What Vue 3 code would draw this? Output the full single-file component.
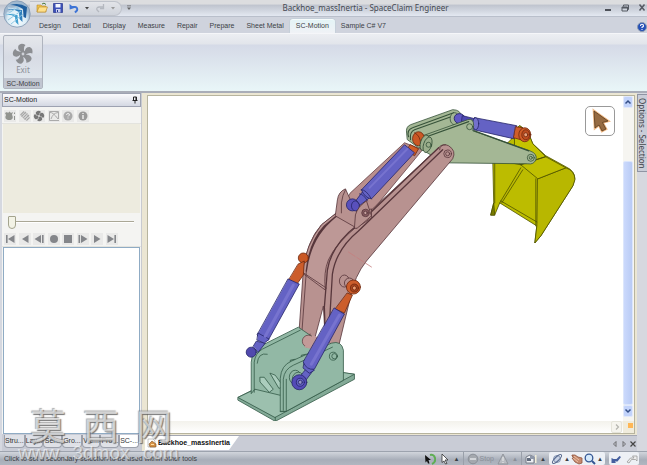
<script setup>
import { ref } from 'vue'

const tabs = ['Design', 'Detail', 'Display', 'Measure', 'Repair', 'Prepare', 'Sheet Metal', 'SC-Motion', 'Sample C# V7']
const activeTab = ref('SC-Motion')
const panelTabs = ['Stru...', 'Lay...', 'Sel...', 'Gro...', 'Vie...', 'Pro...', 'SC-...']
const activePanel = ref('SC-...')
const frame = ref(0)
const playback = [
  { name: 'First frame', d: 'M2 2h1.6v8H2zM10.5 2v8L4 6z' },
  { name: 'Play backwards', d: 'M9.5 2v8L3 6z' },
  { name: 'Step back', d: 'M8 2v8L1.5 6zM9 2h1.6v8H9z' },
  { name: 'Record', d: 'M6 2a4 4 0 1 1 0 8a4 4 0 1 1 0-8z' },
  { name: 'Stop', d: 'M2 2h8v8H2z' },
  { name: 'Step forward', d: 'M1.5 2h1.6v8H1.500zM4 2v8l6.500-4z' },
  { name: 'Play', d: 'M3 2v8l6.500-4z' },
  { name: 'Last frame', d: 'M1.500 2v8L8 6zM8.400 2H10v8H8.400z' }
]
</script>

<template>
  <div class="app">
    <header class="titlebar">
      <div class="quick">
        <button aria-label="Open"><svg viewBox="0 0 12 12"><path d="M1 3h4l1 1h4v6H1z" fill="#f0c34c" stroke="#b88a28" stroke-width=".6" /><path d="M1 10l2-5h8.500l-2 5z" fill="#ffe08a" stroke="#b88a28" stroke-width=".6" /><path d="M6 2q2-2 4 .5" fill="none" stroke="#4b7a3c" /></svg></button>
        <button aria-label="Save"><svg viewBox="0 0 12 12"><path d="M1.500 1.500h9v9h-9z" fill="#3c50b8" stroke="#27358d" stroke-width=".7" /><path d="M3.500 2h5v3.500h-5z" fill="#f3f5ff" /><path d="M4 7h4.500v3.500H4z" fill="#c9d0ee" /><path d="M5 8h1v2H5z" fill="#27358d" /></svg></button>
        <button aria-label="Undo"><svg viewBox="0 0 12 12"><path d="M4 5h3q3 .5 2 3.500l-2 2" fill="none" stroke="#3d74d6" stroke-width="2" /><path d="M1.500 2l.2 5.500L6.500 6z" fill="#3d74d6" /></svg></button>
        <button class="drop" aria-label="Undo history"><svg viewBox="0 0 6 6"><path d="M1 2h4L3 4.500z" fill="#444" /></svg></button>
        <button aria-label="Redo"><svg viewBox="0 0 12 12"><path d="M9 5H5Q2 5.500 3 8l2 2" fill="none" stroke="#b4b8bf" stroke-width="1.300" /><path d="M9.500 2v4.500H6" fill="none" stroke="#b4b8bf" stroke-width="1.300" /></svg></button>
        <button class="drop" aria-label="Redo history"><svg viewBox="0 0 6 6"><path d="M1 2h4L3 4.500z" fill="#999" /></svg></button>
      </div>
      <button class="drop more" aria-label="Customize"><svg viewBox="0 0 6 6"><path d="M1 0.500h4v.8H1zM1 2.500h4L3 5z" fill="#666" /></svg></button>
      <h1>Backhoe_massInertia - SpaceClaim Engineer</h1>
      <div class="window-controls">
        <button aria-label="Minimize"><svg viewBox="0 0 10 10"><path d="M2 6h6v2H2z" fill="#4d5159" /></svg></button>
        <button aria-label="Restore"><svg viewBox="0 0 10 10"><path d="M3.500 3.500V2h5v4.500H7.500M2 4h5.500v4H2z" fill="none" stroke="#555a63" /><path d="M2 4h5.500v1.500H2z" fill="#555a63" /></svg></button>
        <button aria-label="Close"><svg viewBox="0 0 10 10"><path d="M2.500 1.500l5 6M7.500 1.500l-5 6" stroke="#555a63" stroke-width="1.500" /></svg></button>
      </div>
    </header>

    <button class="logo" aria-label="Application menu">
      <svg viewBox="0 0 28 28">
        <defs><radialGradient id="orb" cy=".7"><stop offset="0" stop-color="#fff" /><stop offset=".7" stop-color="#dceef7" /><stop offset="1" stop-color="#9fb8cf" /></radialGradient></defs>
        <circle cx="14" cy="14" r="13.200" fill="url(#orb)" stroke="#7d94ae" stroke-width=".8" />
        <path d="M7 5Q16 2 24 7L23 18L20.500 17L20 9Q14 5 7 5z" fill="#1f5f9f" />
        <path d="M4 10Q12 6 19 10L19.500 22L16.500 19L16 12Q10 8.500 4 10z" fill="#2f80bd" />
        <path d="M3 15Q9 12 14.500 15L15.500 25L12.500 22L12 17Q8 14 3 15z" fill="#43a0d0" />
        <path d="M5 20L18 11M8 24L20 14M3 15L15 7" stroke="#8fc8e4" stroke-width="1" />
        <path d="M5 8L19 9.500M4 13L14.500 14.500" fill="none" stroke="#e8f7ff" stroke-width=".8" />
      </svg>
    </button>

    <nav class="ribbon-tabs">
      <button v-for="t in tabs" :key="t" :class="{ active: t === activeTab }" @click="activeTab = t">{{ t }}</button>
      <button class="help" aria-label="Help"><svg viewBox="0 0 10 10"><circle cx="5" cy="5" r="4.500" fill="#2450b8" stroke="#8d9aaf" /><path d="M3.500 4Q3.500 2.300 5 2.300T6.500 4Q6.300 4.800 5 5.200V6" fill="none" stroke="#fff" stroke-width="1.100" /><path d="M4.500 7h1v1h-1z" fill="#fff" /></svg></button>
    </nav>

    <section class="ribbon">
      <div class="group">
        <button class="exit">
          <svg viewBox="0 0 22 22">
            <g fill="#8c8e92">
              <path v-for="a in [0, 72, 144, 216, 288]" :key="a" :transform="`rotate(${a} 11 11)`" d="M10 9Q5 7 6.500 2.500Q9-.5 13.500 2Q11 4 12.500 9z" />
              <circle cx="11" cy="11" r="3.200" />
            </g>
            <circle cx="11" cy="11" r="1.400" fill="#cfd2d8" />
          </svg>
          <span>Exit</span>
        </button>
        <div class="group-name">SC-Motion</div>
      </div>
    </section>

    <main class="work">
      <aside class="side">
        <div class="panel-head"><span>SC-Motion</span>
          <button aria-label="Pin panel"><svg viewBox="0 0 8 8"><path d="M2.500 1h3v3.500h-3zM1.500 4.500h5M4 4.500V7.500" fill="none" stroke="#222" /><path d="M4.500 1h1v3.500h-1z" fill="#222" /></svg></button>
        </div>
        <div class="tools">
          <button aria-label="Motor"><svg viewBox="0 0 12 12"><path d="M3 2l1 1l1.500-1.500L7 3l2-1L8 4.500Q10 9 6.500 10H4Q0 9 2 5L1 3zM10 2.500h1v1.500h-1zM10 6h1v4h-1z" fill="#92948f" /></svg></button>
          <button aria-label="Spring"><svg viewBox="0 0 12 12"><path d="M1.500 5L5 1.500M2.500 6.500L7 2M4 8L8.500 3.500M5.500 9.500L10 5M7.500 10.500L10.500 7.500" stroke="#a6a6a6" stroke-width="1.100" /><path d="M1.500 5l6 5.500M5 1.500l5.500 6" stroke="#b4b4b4" stroke-width=".8" /></svg></button>
          <button aria-label="Fan"><svg viewBox="0 0 12 12"><g fill="#777"><path v-for="a in [0, 90, 180, 270]" :key="a" :transform="`rotate(${a} 6 6)`" d="M6 6Q2 5 3 2Q6-.5 8 2Q6 3 6 6z" /></g><circle cx="6" cy="6" r="1" fill="#ddd" /></svg></button>
          <button aria-label="Graph"><svg viewBox="0 0 12 12"><path d="M1.500 1.500v9h9.500M2 2.500Q5 2 10 9M3 9Q5 3 10 2.500M1.500 1.500H10.500V9" fill="none" stroke="#aaa" /></svg></button>
          <button aria-label="Help"><svg viewBox="0 0 12 12"><circle cx="6" cy="6" r="4.500" fill="#aaa" /><path d="M4.500 5Q4.500 3.500 6 3.500T7.500 5L6 6.500M6 7.500v1" fill="none" stroke="#eee" /></svg></button>
          <button aria-label="Information"><svg viewBox="0 0 12 12"><circle cx="6" cy="6" r="4.500" fill="#999" /><path d="M6 3v1M6 5v4" stroke="#eee" stroke-width="1.400" /></svg></button>
        </div>
        <div class="preview"></div>
        <div class="slide"><input v-model="frame" type="range" min="0" max="100" aria-label="Animation frame" /></div>
        <div class="tools play">
          <button v-for="p in playback" :key="p.name" :aria-label="p.name"><svg viewBox="0 0 12 12"><path :d="p.d" fill="#84868a" /></svg></button>
        </div>
        <div class="list"></div>
        <div class="panel-tabs">
          <button v-for="p in panelTabs" :key="p" :class="{ active: p === activePanel }" @click="activePanel = p">{{ p }}</button>
        </div>
      </aside>

      <section class="document">
        <div class="frame">
          <div class="canvas">
            <svg class="model" viewBox="148 97 474 323" preserveAspectRatio="xMidYMid meet" role="img" aria-label="Backhoe assembly">
              <g stroke-linejoin="round" stroke-linecap="round" stroke-width=".8">
                <!-- bucket -->
                <g stroke="#4f5200" fill="#bcbc00">
                  <path d="M514 130L519 126L527 132L532 144L545 156L565 167Q574 171 574 179L572 186L540 236L534 243L536 226L499 203L494 215L490 215L493 203L492 158L510 140z" />
                  <path d="M537 179L565 168Q574 171 574 180L572 186L540 236L534 243L536 226z" fill="#b8b700" />
                  <path d="M514 130L519 126L527 132L532 144L545 157L520 165L514 158z" fill="#c4c300" />
                  <path d="M545 157L565 168L537 179L520 165z" fill="#c0bf00" />
                  <path d="M520 168L499 203M522 170L501 203M500 201L536 222M494 160L494 203M545 157L520 165L510 163M535 179V226" fill="none" />
                  <path d="M490 215L493 203L494 215z" fill="#777a00" />
                </g>

                <!-- rear part of the boom -->
                <g stroke="#684348" fill="#b98f8d">
                  <path d="M350 193L404 143L422 150L374 208L356 224L340 213z" />
                  <path d="M358 198L415 148" fill="none" />
                </g>

                <!-- rear link plate -->
                <g stroke="#365239" fill="#a4b795">
                  <path d="M406 133Q405 127 410 125L452 110Q460 110 461 117L464 130L418 148L407 140z" />
                  <path d="M408 137Q406 130 412 128L453 113M410 140Q409 132 414 130L456 115" fill="none" stroke-width="1.100" />
                  <ellipse cx="454" cy="119" rx="4.500" ry="6" />
                </g>
                <!-- bucket cylinder -->
                <g stroke="#252669">
                  <ellipse cx="459" cy="119" rx="5.500" ry="5" fill="#6058c4" transform="rotate(20 459 119)" />
                  <path d="M462 116L474 119L473 126L461 123z" fill="#4e49b0" />
                  <path d="M474 118L516 126L513 139L473 130Q470 123 474 118z" fill="#6462c4" />
                  <ellipse cx="475" cy="124" rx="3" ry="6" fill="#7471cc" />
                </g>
                <g stroke="#6f280e" fill="#cf5d28">
                  <path d="M515 127L522 128L520 140L513 138z" />
                  <ellipse cx="524" cy="135" rx="6" ry="7" />
                  <ellipse cx="525" cy="135" rx="4" ry="5" fill="#bd4d20" />
                  <circle cx="525" cy="135" r="2" fill="#e8a17d" />
                </g>
                <!-- front link plate -->
                <g stroke="#365239" fill="#a4b795">
                  <path d="M419 143Q419 136 425 135L467 120Q473 118 473 126L472 131L529 151Q537 154 535 160Q533 165 527 164L443 163L425 152z" />
                  <path d="M421 145Q421 138 426 137L468 122M473 131L528 151" fill="none" stroke-width="1.300" />
                  <circle cx="469" cy="127" r="3" /><circle cx="428" cy="145" r="3" /><circle cx="530" cy="158" r="3.500" /><circle cx="530" cy="158" r="1.500" />
                </g>

                <!-- upper boom cylinder -->
                <path d="M410 145L418 149L414 156L406 151z" fill="#cf5d28" stroke="#6f280e" />
                <ellipse cx="418" cy="139" rx="6" ry="7" fill="#ca5825" stroke="#6f280e" />
                <path d="M414 133Q420 136 420 144" fill="none" stroke="#6f280e" />
                <g fill="#9bae8c" stroke="#365239"><ellipse cx="424" cy="143" rx="4" ry="8" transform="rotate(18 424 143)" /><ellipse cx="427" cy="145" rx="4" ry="8" transform="rotate(18 427 145)" /><circle cx="428" cy="145" r="2.500" /></g>

                <!-- boom -->
                <g stroke="#57363b" fill="#b89290">
                  <path d="M339 211L321 225Q307 240 303 270L298 342L306 347L315 336L323 306L325 341L338 347L350 297Q354 276 366 261L452 159Q456 151 448 146Q442 143 438 148L357 223L353 228z" />
                  <path d="M339 211L357 226Q335 244 328 260Q323 272 325 290L302 273Q305 245 321 225z" fill="#bd9896" />
                  <path d="M340 213L324 226Q309 242 306 271M335 217Q310 237 306 271" fill="none" stroke-width="1.400" />
                  <path d="M438 148L357 225Q331 245 327 270L324 307L325 341M442 150L358 231Q336 249 332 274L328 341" fill="none" stroke-width="1.300" />
                  <path d="M306 271L301 340L306 345M302 272L326 288M303 343Q304 334 310 334" fill="none" />
                  <circle cx="447" cy="154" r="3.800" /><circle cx="447" cy="154" r="2" />
                  <path d="M439 150Q439 145 445 145" fill="none" />
                  <path d="M335 215L337 200Q338 192 345 189L350 200L357 213L371 209V218L356 228L335 216z" />
                  <path d="M341 213L341 203Q342 195 345 190" fill="none" />
                  <ellipse cx="344" cy="281" rx="5" ry="6" /><ellipse cx="349" cy="283" rx="5" ry="5" />
                </g>
                <path d="M348 252L371 267" stroke="#c57f80" stroke-dasharray="8 2" />

                <g stroke="#252669" fill="#5950bc">
                  <ellipse cx="352" cy="205" rx="6" ry="6" /><ellipse cx="355" cy="206" rx="4" ry="5" />
                  <path d="M356 200L362 192L369 198L360 205z" fill="#625fc4" />
                  <path d="M361 190L404 145L414 153L371 199Q364 198 361 190z" fill="#6462c4" />
                  <path d="M361 190Q365 189 371 199M359 194Q363 194 367 201" fill="none" />
                  <path d="M369 188L407 149" stroke="#7773cf" stroke-width="2" />
                </g>
                <!-- near lug of the boom bracket -->
                <g stroke="#57363b" fill="#b89290">
                  <path d="M354 228L355 215Q357 207 366 201L371 216L357 228z" />
                  <circle cx="365" cy="213" r="3.700" fill="#875b61" /><circle cx="365" cy="213" r="1.700" fill="#c8a1a0" />
                </g>

                <!-- base -->
                <g stroke="#355b49" fill="#92b8a5">
                  <path d="M238 397L298 367L354 374V379L275 421L238 400z" fill="#83aa97" />
                  <path d="M238 397L302 366L354 374L275 417z" fill="#9cc0ae" />
                  <path d="M251 393V362Q252 350 260 346L298 327L317 340L332 350V375L280 395L255 389z" />
                  <path d="M254 392V362Q255 353 262 349L300 330M275 417V421" fill="none" />
                  <path d="M257 363Q258 352 267 354" fill="none" />
                  <path d="M260 377L264 377L273 389L269 392L260 382zM270 373L275 375L283 386L279 388z" fill="#abcdbd" />
                  <path d="M290 363V360L295 359V363M301 358V355L306 354V358" fill="#779f8c" />
                  <path d="M280 411V378Q281 365 291 361L331 343Q341 340 343 350V380L286 411z" />
                  <path d="M283 410V379Q284 369 293 365L332 347M280 411L286 411V379" fill="none" />
                  <circle cx="333" cy="356" r="4" /><circle cx="334" cy="356" r="2.600" />
                  <ellipse cx="295" cy="377" rx="6" ry="7" /><ellipse cx="298" cy="379" rx="6" ry="7" />
                </g>
                <ellipse cx="308" cy="341" rx="6" ry="6" fill="#c29a98" stroke="#684348" />
                <path d="M304 347L317 350L324 339L312 335z" fill="#c29a98" />

                <!-- rear lift cylinder -->
                <circle cx="303" cy="258" r="5" fill="#c95825" stroke="#6f280e" />
                <path d="M298 264L304 261L303 275L296 285L288 281z" fill="#cc5d2b" stroke="#6f280e" />
                <g stroke="#252669" fill="#6462c4">
                  <circle cx="251" cy="352" r="5" fill="#5149ae" /><path d="M253 346L256 341L265 343L258 352z" />
                  <path d="M288 279L299 284L268 340Q261 342 257 335z" /><path d="M258 333L269 339L264 343L257 340z" />
                  <path d="M293 285L265 336" stroke="#7773cf" stroke-width="3" />
                </g>
                <!-- front lift cylinder -->
                <g stroke="#6f280e" fill="#cc5d2b">
                  <path d="M347 293L352 295L344 313L335 309z" /><circle cx="353" cy="287" r="7" /><circle cx="354" cy="288" r="4" fill="#aa451d" /><circle cx="354" cy="288" r="2" fill="#ee9c70" />
                </g>
                <g stroke="#252669" fill="#6462c4">
                  <path d="M303 372L308 366L313 370L304 382L299 378z" /><path d="M304 362L314 370L309 373L303 368z" />
                  <path d="M334 308L344 314L314 369Q306 370 303 362z" /><path d="M339 315L311 364" stroke="#7773cf" stroke-width="3" />
                  <circle cx="299" cy="382" r="7.500" fill="#544bb7" /><circle cx="300" cy="382" r="4" /><circle cx="300" cy="382" r="2" fill="#9493ca" />
                </g>
              </g>
            </svg>
            <button class="cursor-badge" aria-label="Selection tool"><svg viewBox="0 0 28 28"><path d="M8 4L22 14L16.500 15.500L20 22L16 24L13 18L9 21z" fill="#9a6a3c" stroke="#f0b985" stroke-width="2.600" /><path d="M8 4L22 14L16.500 15.500L20 22L16 24L13 18L9 21z" fill="#966b42" stroke="#583a1c" stroke-width=".8" /></svg></button>
          </div>
          <div class="vscroll">
            <button aria-label="Scroll up"><svg viewBox="0 0 8 8"><path d="M1.500 5.500L4 3l2.500 2.500" fill="none" stroke="#344e86" stroke-width="1.500" /></svg></button>
            <i class="thumb"></i>
            <button aria-label="Scroll down"><svg viewBox="0 0 8 8"><path d="M1.500 2.500L4 5l2.500-2.500" fill="none" stroke="#344e86" stroke-width="1.500" /></svg></button>
          </div>
          <div class="hscroll"><button aria-label="Scroll right"><svg viewBox="0 0 8 8"><path d="M3 1.500L5.500 4L3 6.500" fill="none" stroke="#b4b4ae" stroke-width="1.200" /></svg></button></div>
          <div class="corner"><i></i></div>
        </div>
        <div class="doc-tabs">
          <button class="doc-tab"><svg viewBox="0 0 10 10"><path d="M1 1h5l2 2v6H1z" fill="#fff" stroke="#aaa" stroke-width=".7" /><path d="M2 6l3-3l4 3v3H3z" fill="#d39045" stroke="#7d5226" stroke-width=".6" /><path d="M4 6.500h3" stroke="#ffe0a6" /></svg><span>Backhoe_massInertia</span></button>
          <div class="doc-nav">
            <button aria-label="Previous document"><svg viewBox="0 0 8 8"><path d="M5 1.500v5L2.500 4z" fill="none" stroke="#555" stroke-width=".8" /></svg></button>
            <button aria-label="Next document"><svg viewBox="0 0 8 8"><path d="M3 1.500v5L5.500 4z" fill="none" stroke="#555" stroke-width=".8" /></svg></button>
            <button aria-label="Close document"><svg viewBox="0 0 8 8"><path d="M1.500 1.500l5 5M6.500 1.500l-5 5" stroke="#444" stroke-width="1.200" /></svg></button>
          </div>
        </div>
      </section>

      <div class="dock"><button>Options - Selection</button></div>
    </main>

    <footer class="status">
      <span class="message">Click to set a secondary selection to be used within other tools</span>
      <div class="set">
        <button aria-label="Reselect"><svg viewBox="0 0 12 12"><path d="M6 2Q10 1 11 5T8 11" fill="none" stroke="#5fae54" stroke-width="2" /><path d="M1 2l6 5H4.500l1 3.500H4L3 8L1.500 9.500z" fill="#111" /></svg></button>
        <button aria-label="Select"><svg viewBox="0 0 12 12"><path d="M3 1l6 6H6l2 3.500L6.500 11L5 8L3 9.500z" fill="#fff" stroke="#333" stroke-width=".8" /></svg></button>
        <button class="up" aria-label="Select options">▴</button>
      </div>
      <div class="set rule muted">
        <button class="stop"><svg viewBox="0 0 12 12"><circle cx="6" cy="6" r="4.800" fill="#a4a8ae" stroke="#8b9098" /><path d="M3 5h6v2H3z" fill="#d2d5d9" /></svg>Stop</button>
        <button aria-label="Warnings"><svg viewBox="0 0 12 12"><path d="M6 1l5 10H1z" fill="#b9bcc2" stroke="#90949b" /><path d="M5.500 4h1v4h-1zM5.500 9h1v1h-1z" fill="#eee" /></svg></button>
        <button class="up" aria-label="Warning options">▴</button>
      </div>
      <div class="set rule">
        <button aria-label="Views"><svg viewBox="0 0 12 12"><path d="M1 4l4-2l4 2v6H1z" fill="#eef0f4" stroke="#777d88" /><path d="M10 2h1.500v8H10z" fill="#f1edd8" /><path d="M2 5h4v3H2z" fill="#626c7e" /><path d="M5 3h4v3H5z" fill="#8f98a9" /></svg></button>
        <button class="up" aria-label="View options">▴</button>
      </div>
      <div class="set light">
        <button aria-label="Orbit"><svg viewBox="0 0 12 12"><circle cx="6" cy="6" r="3.500" fill="#c9d3e6" stroke="#7385a6" stroke-width=".8" /><ellipse cx="6" cy="6" rx="6" ry="2" transform="rotate(-45 6 6)" fill="none" stroke="#53658a" /></svg></button>
        <button class="up" aria-label="Orbit options">▴</button>
        <button aria-label="Pan"><svg viewBox="0 0 12 12"><path d="M1 2l3 0l3 2l4 1v5l-3 1l-4-2l-3-4l2 0l-2-2z" fill="#c68a6f" stroke="#8e543f" stroke-width=".8" /><path d="M3 3l5 4M2 5l5 4" stroke="#edc2a6" /></svg></button>
        <button aria-label="Zoom"><svg viewBox="0 0 12 12"><circle cx="5" cy="5" r="3.800" fill="#d5e9fb" stroke="#355794" stroke-width="1.300" /><path d="M8 8l3 3" stroke="#355794" stroke-width="2" /></svg></button>
        <button class="up" aria-label="Zoom options">▴</button>
      </div>
      <div class="set light views">
        <button aria-label="Previous view"><svg viewBox="0 0 12 12"><path d="M1.500 5v5H6L4.800 8.500H7.500L11 4L9.500 3L6.500 6H3.500z" fill="#445e9e" /></svg></button>
        <button aria-label="Next view"><svg viewBox="0 0 12 12"><path d="M1 9l3.500-4H8L6.500 3H11v5L9.500 6.500H5.500L3 10z" fill="#eee" stroke="#999" stroke-width=".8" /></svg></button>
      </div>
    </footer>

    <div class="watermark">
      <div class="cjk"><span>莫</span><span>西</span><span>网</span></div>
      <div class="site"><span>www</span><span>.</span><span>3dmox</span><span>.</span><span>com</span></div>
    </div>
  </div>
</template>

<style>
body { margin: 0; }
</style>

<style scoped>
* { box-sizing: border-box; }
.app { position: relative; display: flex; flex-direction: column; min-height: 100vh; overflow: hidden; background: #cfd3dd; color: #3c3f46; font: 7px/10px "Liberation Sans", Arial, sans-serif; }
button { display: flex; align-items: center; justify-content: center; margin: 0; padding: 0; border: 0; background: none; color: inherit; font: inherit; }
svg { display: block; }

.titlebar { position: relative; display: flex; align-items: center; height: 17px; padding-left: 30px; border-bottom: 1px solid #b9bfcb; background: linear-gradient(#dcdddf 0 25%, #bfc4ce 32%, #e3e8f1); }
.quick { display: flex; align-items: center; gap: 4px; height: 15px; padding: 0 5px 0 6px; border: 1px solid #bfc3cb; border-left: 0; border-radius: 0 8px 8px 0; background: linear-gradient(#e2e4e8, #cfd3db); }
.quick svg { width: 12px; height: 12px; }
.drop svg, .quick .drop svg { width: 6px; height: 6px; }
.more { margin-left: 4px; }
h1 { flex: 1; margin: 0; padding-right: 4px; text-align: center; font: 8px/14px "Noto Sans", sans-serif; color: #454952; }
.window-controls { display: flex; gap: 7px; padding-right: 0; }
.window-controls svg { width: 10px; height: 10px; }
.logo { position: absolute; z-index: 2; top: 0; left: 3px; width: 28px; height: 28px; }
.logo svg { width: 28px; height: 28px; }

.ribbon-tabs { display: flex; height: 16px; padding: 2px 0 0 33px; background: #cfd3dd; }
.ribbon-tabs button { padding: 0 6px 1px; border: 1px solid transparent; border-bottom: 0; border-width: 1px 0 0; white-space: nowrap; }
.ribbon-tabs .active { border-color: #f6fbfc; border-radius: 3px 3px 0 0; background: linear-gradient(#e4f4f6, #f0f2f6); box-shadow: 0 0 1px #75aeb5; }
.ribbon-tabs .help { margin-left: auto; padding: 0; }
.help svg { width: 10px; height: 10px; }
.ribbon { display: flex; height: 60px; padding: 1px 3px 2px; border-top: 1px solid #f5f6f9; border-bottom: 2px solid #a9adb8; background: linear-gradient(#eceef2, #e2e5eb 10px, #d5dae7 11px, #e9f6f8); }
.group { display: flex; flex-direction: column; width: 40px; border: 1px solid #afb4be; border-radius: 2px; background: linear-gradient(#e5e7eb, #d7dbe4 40%, #e3eaf0); }
.exit { flex: 1; flex-direction: column; padding-top: 3px; color: #8c9097; font: 8px/10px "Noto Sans", sans-serif; }
.exit svg { width: 22px; height: 22px; }
.group-name { padding-top: 1px; background: #c1c6d1; text-align: center; line-height: 9px; }

.work { flex: 1; display: grid; grid-template-columns: 140px minmax(0, 1fr) 10px; column-gap: 0; padding-left: 2px; background: #d5d8e0; }
.side { display: flex; flex-direction: column; border-right: 1px solid #c8cad0; background: #f4f4f2; }
.panel-head { display: flex; align-items: center; justify-content: space-between; height: 14px; padding: 0 1px; border: 1px solid #9da2b1; background: linear-gradient(#fafafc, #d4d8e3); color: #222; }
.panel-head svg { width: 8px; height: 8px; }
.tools { display: grid; grid-template-columns: repeat(8, 1fr); height: 17px; padding: 1px 22px 0 1px; border-bottom: 1px solid #e3e3de; }
.tools svg { width: 12px; height: 12px; background: #e9e9e8; }
.preview { height: 89px; margin: 0 1px; background: #edebdf; }
.slide { display: flex; height: 19px; align-items: center; padding: 0 7px 0 6px; }
.slide input { appearance: none; width: 100%; height: 16px; margin: 0; background: linear-gradient(transparent 6px, #aaa796 6px 7px, #fff 7px 8px, transparent 8px); }
.slide input::-webkit-slider-thumb { appearance: none; width: 8px; height: 13px; border: 1px solid #a4a48e; border-radius: 1px 1px 4px 4px; background: #f3f3e6; }
.play { height: 15px; padding-top: 0; }
.list { flex: 1; margin: 0 1px; border: 1px solid #8fabc4; background: #fff; }
.panel-tabs { display: flex; height: 17px; padding: 1px 2px 2px; background: #c9ccd6; }
.panel-tabs button { flex: 1; align-items: flex-start; height: 13px; padding-top: 1px; border: 1px solid #9ca0ab; border-top: 0; border-radius: 0 0 4px 4px; background: #dfe1e7; color: #333; }
.panel-tabs .active { background: #fff; }

.document { display: flex; flex-direction: column; min-width: 0; padding-left: 1px; background: #ebe6d3; }
.frame { flex: 1; display: grid; grid-template: minmax(0, 1fr) 12px / minmax(0, 1fr) 11px; margin: 2px 2px 1px 4px; border: 1px solid #b7b49e; background: #fff; }
.canvas { position: relative; min-height: 0; overflow: hidden; background: #fff; }
.model { width: 100%; height: 100%; }
.cursor-badge { position: absolute; top: 10px; right: 8px; width: 30px; height: 30px; border: 1px solid #999; border-radius: 5px; background: #fff; }
.cursor-badge svg { width: 28px; height: 28px; }
.vscroll { display: flex; flex-direction: column; padding-right: 1px; background: #f6f5f1; }
.vscroll button { height: 12px; border: 1px solid #e2e9fb; border-radius: 2px; background: #c2d3fb; }
.vscroll button:last-child { margin-bottom: 4px; }
.vscroll svg, .hscroll svg { width: 8px; height: 8px; }
.thumb { flex: 1; margin-top: 53px; border: 1px solid #dce6fc; border-radius: 2px; background: linear-gradient(90deg, #cbd9fc, #b9cbf5); }
.hscroll { display: flex; justify-content: flex-end; padding-right: 1px; background: linear-gradient(#f3f2ec, #fff); }
.hscroll button { width: 11px; border: 1px solid #e5e4da; border-radius: 2px; background: #f5f4ee; }
.corner { display: flex; justify-content: flex-end; padding: 2px 1px; background: #f0ecdc; }
.corner i { width: 5px; height: 5px; background: #ffb755; }
.doc-tabs { display: flex; justify-content: space-between; height: 16px; margin-left: 2px; border-top: 1px solid #a4a7b2; background: #c9ccd6; }
.doc-tab { gap: 1px; height: 14px; padding: 0 9px 0 2px; background: #fff; clip-path: polygon(0 0, 100% 0, calc(100% - 10px) 100%, 0 100%); color: #111; font-weight: bold; }
.doc-tab svg { width: 10px; height: 10px; }
.doc-nav { display: flex; gap: 1px; }
.doc-nav svg { width: 8px; height: 8px; }
.dock { padding-top: 1px; background: #d6d8df; }
.dock button { width: 11px; height: 78px; border: 1px solid #8f94a3; background: #c9cdd8; writing-mode: vertical-rl; white-space: nowrap; font: 8px/9px "Noto Sans", sans-serif; }

.status { display: flex; align-items: center; height: 14px; padding-right: 8px; border-top: 1px solid #9da3ae; background: linear-gradient(#d1d5dc, #a8aeb9 60%, #b0b6c0); }
.message { flex: 1; padding-left: 4px; white-space: nowrap; }
.set { display: flex; align-items: center; gap: 3px; height: 13px; padding: 0 3px; }
.set svg { width: 12px; height: 12px; }
.rule { border-left: 1px solid #999fa9; }
.muted { color: #8a8f98; }
.light { gap: 1px; padding: 0 2px; border-radius: 2px; background: #edf0f5; }
.views { gap: 4px; padding: 0 1px; margin-left: 4px; }
.stop { gap: 1px; }
.up { width: 6px; font: 7px/8px "DejaVu Sans", sans-serif; }

.watermark { position: absolute; left: 18px; bottom: 2px; z-index: 3; pointer-events: none; }
.cjk { display: flex; gap: 17px; padding-left: 12px; color: #ffffffa0; font: 36px/38px "Noto Sans CJK SC", sans-serif; text-shadow: 1px 1px 1px #555c, -1px -1px 1px #7779; }
.site { display: flex; gap: 4px; color: #ffffff90; font: 19px/20px "Liberation Sans", sans-serif; text-shadow: 1px 1px 1px #6669; }
</style>
